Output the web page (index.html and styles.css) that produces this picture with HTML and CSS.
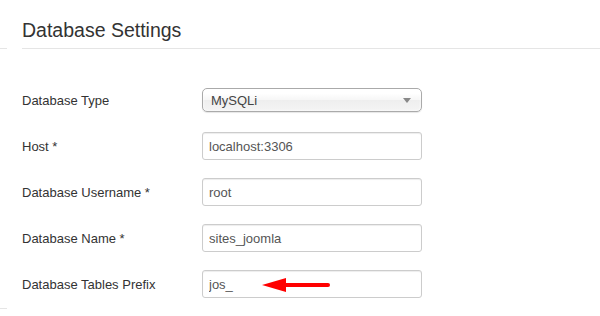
FILE: index.html
```html
<!DOCTYPE html>
<html lang="en">
    <head>
        <meta charset="UTF-8">
        <title>Database Settings</title>
        <link rel="stylesheet" href="styles.css">
    </head>
    <body>
        <div class="page-header">
            <span class="stub"></span>
            <h3>Database Settings</h3>
        </div>
        <form class="settings">
            <div class="row">
                <label>Database Type</label>
                <div class="select">
                    <span>MySQLi</span>
                    <b class="caret"></b>
                </div>
            </div>
            <div class="row">
                <label>Host *</label>
                <input type="text" value="localhost:3306">
            </div>
            <div class="row">
                <label>Database Username *</label>
                <input type="text" value="root">
            </div>
            <div class="row">
                <label>Database Name *</label>
                <input type="text" value="sites_joomla">
            </div>
            <div class="row">
                <label>Database Tables Prefix</label>
                <div class="field">
                    <input type="text" value="jos_">
                    <svg class="arrow" width="70" height="16" viewBox="0 0 70 16">
                        <path d="M22 8 H66" stroke="#f00" stroke-width="4" stroke-linecap="round"/>
                        <path d="M0 8 L24 1 L24 15 Z" fill="#f00"/>
                    </svg>
                </div>
            </div>
        </form>
        <div class="page-footer">
            <span class="stub"></span>
        </div>
    </body>
</html>
```

FILE: styles.css
```css
body {
    margin: 0;
    font-family: "Liberation Sans", Arial, sans-serif;
    font-size: 13px;
    color: #333;
    background: #fff;
}
.page-header {
    display: flex;
    align-items: flex-end;
    padding-top: 18px;
}
.stub {
    width: 7px;
    border-bottom: 1px solid #e5e5e5;
}
.page-header h3 {
    flex: 1;
    margin: 0 0 0 15px;
    font-size: 19.5px;
    font-weight: normal;
    line-height: 24px;
    padding-bottom: 6px;
    border-bottom: 1px solid #e5e5e5;
}
.settings {
    display: flex;
    flex-direction: column;
    gap: 18px;
    padding: 37px 0 0 22px;
}
.row {
    display: flex;
    align-items: center;
    height: 28px;
}
.row label {
    width: 180px;
}
.row input {
    box-sizing: border-box;
    width: 220px;
    height: 28px;
    margin: 0;
    padding: 4px 6px;
    border: 1px solid #ccc;
    border-radius: 3px;
    font-family: inherit;
    font-size: 13px;
    color: #555;
    box-shadow: inset 0 1px 1px rgba(0, 0, 0, 0.075);
}
.select {
    box-sizing: border-box;
    width: 220px;
    height: 24px;
    display: flex;
    align-items: center;
    justify-content: space-between;
    padding: 0 10px 0 8px;
    border: 1px solid #aaa;
    border-radius: 5px;
    background: linear-gradient(#fff 20%, #f6f6f6 50%, #eee 52%, #f4f4f4);
    box-shadow: 0 0 3px #fff inset, 0 1px 1px rgba(0, 0, 0, 0.1);
    color: #444;
}
.caret {
    width: 0;
    height: 0;
    border-left: 4px solid transparent;
    border-right: 4px solid transparent;
    border-top: 5px solid #888;
}
.field {
    position: relative;
}
.arrow {
    position: absolute;
    left: 60px;
    top: 7px;
}
.page-footer {
    display: flex;
    padding-top: 10px;
}
```
